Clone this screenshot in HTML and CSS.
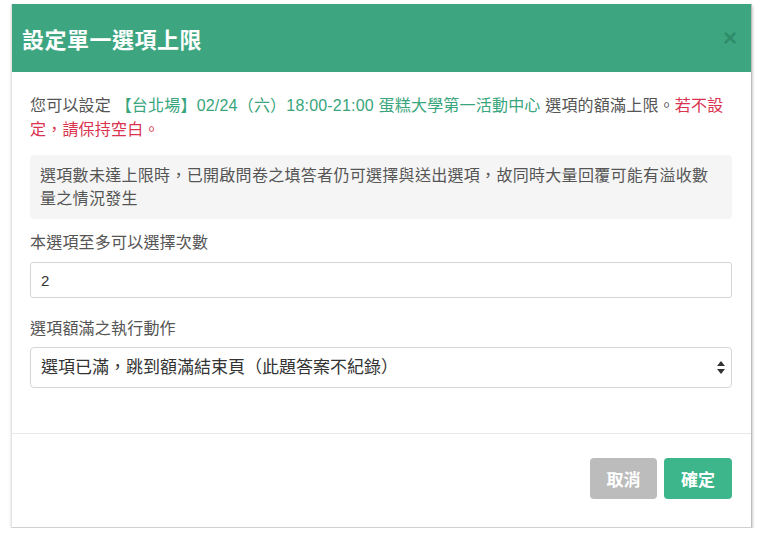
FILE: index.html
```html
<!DOCTYPE html>
<html lang="zh-TW">
<head>
    <meta charset="UTF-8">
    <meta name="viewport" content="width=device-width, initial-scale=1.0">
    <title>設定單一選項上限</title>
    <link rel="stylesheet" href="styles.css">
</head>
<body>
    <div class="modal">
        <header class="modal-header">
            <h2>設定單一選項上限</h2>
            <span class="close">&times;</span>
        </header>

        <section class="modal-body">
            <p class="intro">您可以設定 <span class="green">【台北場】02/24（六）18:00-21:00 蛋糕大學第一活動中心</span> 選項的額滿上限。<span class="red">若不設定，請保持空白。</span></p>
            <div class="notice">選項數未達上限時，已開啟問卷之填答者仍可選擇與送出選項，故同時大量回覆可能有溢收數量之情況發生</div>

            <label class="field-label" for="limit">本選項至多可以選擇次數</label>
            <input class="field-input" id="limit" type="text" value="2">

            <label class="field-label second" for="action">選項額滿之執行動作</label>
            <div class="select-wrap">
                <select class="field-select" id="action">
                    <option>選項已滿，跳到額滿結束頁（此題答案不紀錄）</option>
                </select>
                <svg class="select-arrow" width="8" height="13" viewBox="0 0 8 13">
                    <path d="M4 0 L8 5 L0 5 Z" fill="#333"/>
                    <path d="M0 8 L8 8 L4 13 Z" fill="#333"/>
                </svg>
            </div>
        </section>

        <footer class="modal-footer">
            <button class="btn btn-cancel">取消</button>
            <button class="btn btn-ok">確定</button>
        </footer>
    </div>
</body>
</html>
```

FILE: styles.css
```css
html, body {
    margin: 0;
    padding: 0;
    background-color: #fff;
}

body {
    font-family: "Liberation Sans", "Noto Sans CJK TC", sans-serif;
    color: #555;
    font-size: 16px;
}

.modal {
    margin: 4px 0 0 12px;
    width: 739px;
    height: 523px;
    background-color: #fff;
    border-right: 1px solid #bdbdbd;
    border-bottom: 1px solid #d0d0d0;
    box-shadow: -1px 0 0 #e4e4e4, 0 2px 3px rgba(0, 0, 0, 0.35);
    display: flex;
    flex-direction: column;
}

.modal-header {
    height: 68px;
    flex-shrink: 0;
    background-color: #3da681;
    display: flex;
    align-items: center;
    justify-content: space-between;
    padding: 0 14px 0 10px;
    box-sizing: border-box;
}

.modal-header h2 {
    margin: 0;
    font-size: 22px;
    font-weight: bold;
    color: #fff;
    letter-spacing: 0.5px;
}

.close {
    font-size: 24px;
    font-weight: bold;
    color: #2c8664;
    opacity: 0.8;
    line-height: 1;
}

.modal-body {
    padding: 22px 19px 45px 18px;
    border-bottom: 1px solid #e8e8e8;
}

.intro {
    margin: 0;
    line-height: 24px;
    letter-spacing: 0.2px;
}

.green {
    color: #38a57c;
}

.red {
    color: #d9334f;
}

.notice {
    margin-top: 13px;
    padding: 9px 10px;
    background-color: #f5f5f5;
    border-radius: 4px;
    line-height: 23px;
    letter-spacing: 0.3px;
    color: #555;
}

.field-label {
    display: block;
    margin-top: 14px;
    line-height: 20px;
    letter-spacing: 0.2px;
    color: #555;
}

.field-label.second {
    margin-top: 21px;
}

.field-input {
    display: block;
    box-sizing: border-box;
    width: 100%;
    height: 36px;
    margin-top: 9px;
    padding: 0 10px;
    border: 1px solid #d6d6d6;
    border-radius: 3px;
    font-family: inherit;
    font-size: 15px;
    color: #333;
    outline: none;
}

.select-wrap {
    position: relative;
    margin-top: 8px;
}

.field-select {
    display: block;
    box-sizing: border-box;
    width: 100%;
    height: 41px;
    padding: 0 10px;
    border: 1px solid #d6d6d6;
    border-radius: 4px;
    background-color: #fff;
    font-family: inherit;
    font-size: 17px;
    color: #333;
    -webkit-appearance: none;
    appearance: none;
    outline: none;
}

.select-arrow {
    position: absolute;
    right: 7px;
    top: 14px;
}

.modal-footer {
    display: flex;
    justify-content: flex-end;
    gap: 7px;
    padding: 24px 19px 0 0;
}

.btn {
    width: 67px;
    height: 41px;
    border: 0;
    border-radius: 4px;
    font-family: inherit;
    font-size: 17px;
    font-weight: bold;
    color: #fff;
}

.btn-cancel {
    background-color: #bcbcbc;
}

.btn-ok {
    background-color: #3cb68a;
    width: 68px;
}
```
